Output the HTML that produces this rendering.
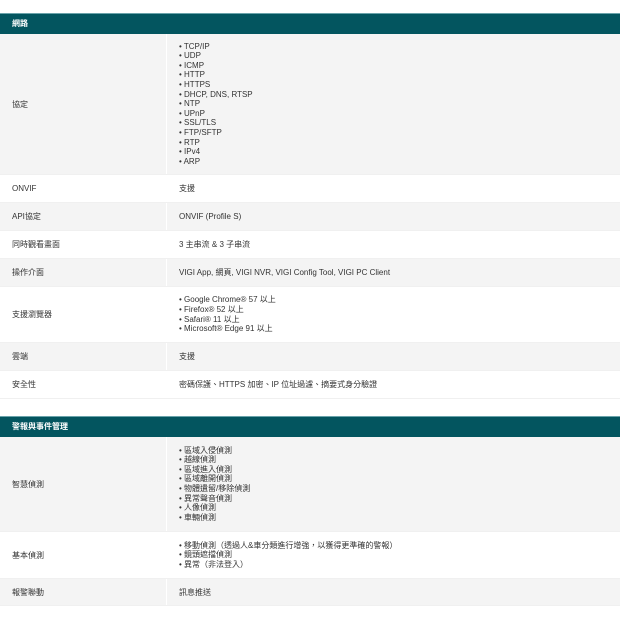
<!DOCTYPE html>
<html><head><meta charset="utf-8"><style>
*{margin:0;padding:0;box-sizing:border-box}
body{width:620px;height:620px;background:#fff;font-family:"Liberation Sans","Noto Sans CJK TC",sans-serif;font-size:8px;color:#333;position:relative;overflow:hidden}
.h{position:absolute;left:0;width:620px;height:21px;background:#03555f;border-top:1px solid #6aa3aa;color:#fff;font-weight:bold;font-size:8px;line-height:20px;padding-left:12px}
.r{position:absolute;left:0;width:620px;display:flex;align-items:center;border-bottom:1px solid #f0f0f0}
.g{background:#f4f4f4}
.l{width:167px;padding-left:12px;border-right:1px solid #fff}
.r>.l,.r>.v{height:100%;display:flex;align-items:center}
.v{padding-left:12px;flex:1}
.v div{line-height:9.6px}
</style></head><body>
<div class="h" style="top:13px">網路</div>
<div class="r g" style="top:34px;height:141px"><div class="l">協定</div><div class="v"><div>
<div>• TCP/IP</div><div>• UDP</div><div>• ICMP</div><div>• HTTP</div><div>• HTTPS</div><div>• DHCP, DNS, RTSP</div><div>• NTP</div><div>• UPnP</div><div>• SSL/TLS</div><div>• FTP/SFTP</div><div>• RTP</div><div>• IPv4</div><div>• ARP</div></div></div></div>
<div class="r" style="top:175px;height:28px"><div class="l">ONVIF</div><div class="v">支援</div></div>
<div class="r g" style="top:203px;height:28px"><div class="l">API協定</div><div class="v">ONVIF (Profile S)</div></div>
<div class="r" style="top:231px;height:28px"><div class="l">同時觀看畫面</div><div class="v">3 主串流 &amp; 3 子串流</div></div>
<div class="r g" style="top:259px;height:28px"><div class="l">操作介面</div><div class="v">VIGI App, 網頁, VIGI NVR, VIGI Config Tool, VIGI PC Client</div></div>
<div class="r" style="top:287px;height:56px"><div class="l">支援瀏覽器</div><div class="v"><div><div>• Google Chrome® 57 以上</div><div>• Firefox® 52 以上</div><div>• Safari® 11 以上</div><div>• Microsoft® Edge 91 以上</div></div></div></div>
<div class="r g" style="top:343px;height:28px"><div class="l">雲端</div><div class="v">支援</div></div>
<div class="r" style="top:371px;height:28px"><div class="l">安全性</div><div class="v">密碼保護、HTTPS 加密、IP 位址過濾、摘要式身分驗證</div></div>
<div class="h" style="top:416px">警報與事件管理</div>
<div class="r g" style="top:437px;height:95px"><div class="l">智慧偵測</div><div class="v"><div><div>• 區域入侵偵測</div><div>• 越線偵測</div><div>• 區域進入偵測</div><div>• 區域離開偵測</div><div>• 物體遺留/移除偵測</div><div>• 異常聲音偵測</div><div>• 人像偵測</div><div>• 車輛偵測</div></div></div></div>
<div class="r" style="top:532px;height:47px"><div class="l">基本偵測</div><div class="v"><div><div>• 移動偵測（透過人&amp;車分類進行增強，以獲得更準確的警報）</div><div>• 鏡頭遮擋偵測</div><div>• 異常（非法登入）</div></div></div></div>
<div class="r g" style="top:579px;height:27px"><div class="l">報警聯動</div><div class="v">訊息推送</div></div>
</body></html>
